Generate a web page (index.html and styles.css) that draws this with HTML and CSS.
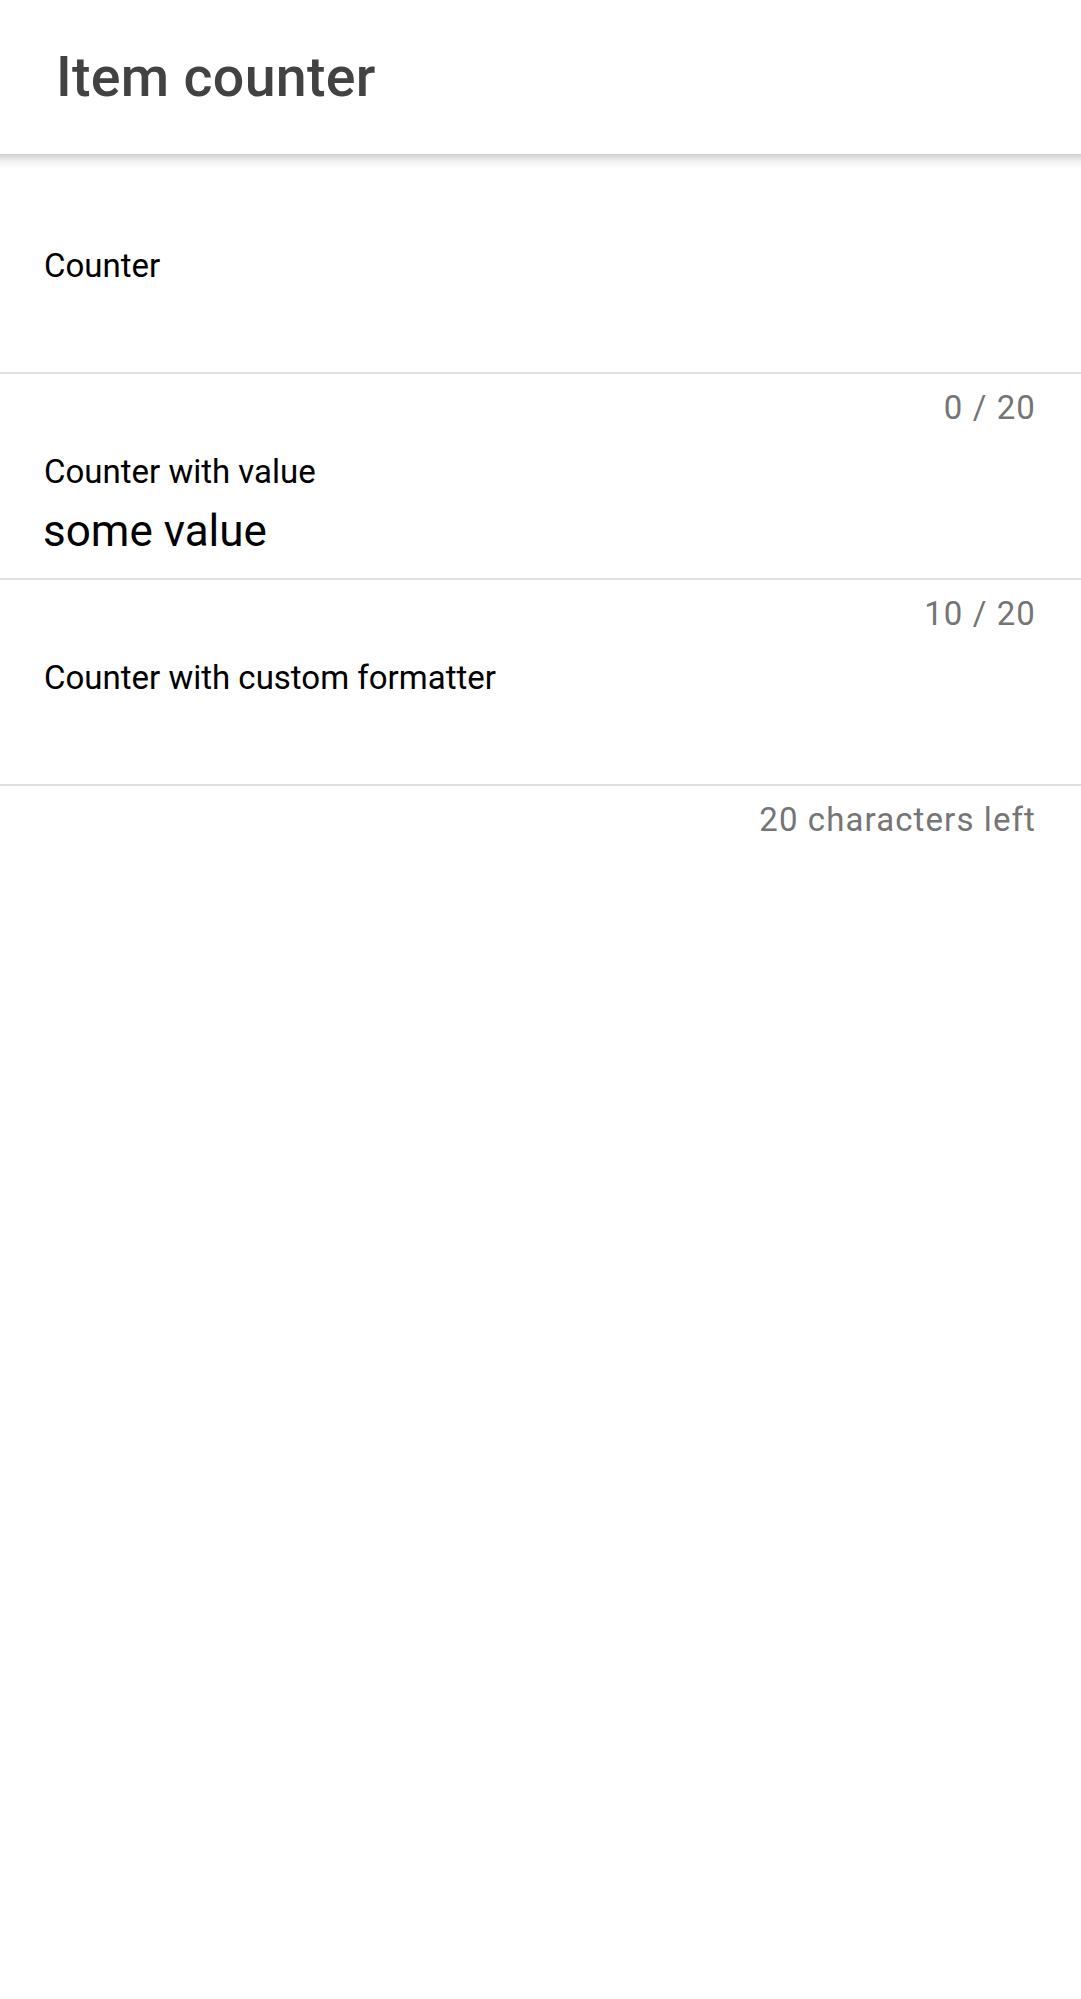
FILE: index.html
```html
<!DOCTYPE html>
<html lang="en">
<head>
<meta charset="utf-8">
<title>Item counter</title>
<link rel="stylesheet" href="styles.css">
</head>
<body>
<header class="app-bar">
  <h1 class="app-title">Item counter</h1>
</header>
<main class="form">
  <div class="field">
    <label class="field-label" for="f1">Counter</label>
    <input class="field-input" id="f1" type="text" value="">
    <div class="field-counter">0 / 20</div>
  </div>
  <div class="field">
    <label class="field-label" for="f2">Counter with value</label>
    <input class="field-input" id="f2" type="text" value="some value">
    <div class="field-counter">10 / 20</div>
  </div>
  <div class="field">
    <label class="field-label" for="f3">Counter with custom formatter</label>
    <input class="field-input" id="f3" type="text" value="">
    <div class="field-counter">20 characters left</div>
  </div>
</main>
</body>
</html>
```
FILE: styles.css
```css
html, body {
  margin: 0;
  padding: 0;
  background: #ffffff;
  font-family: Roboto, "Noto Sans", "Liberation Sans", sans-serif;
}

.app-bar {
  position: relative;
  height: 154px;
  display: flex;
  align-items: center;
  padding-left: 56px;
  background: #ffffff;
}

.app-bar::after {
  content: "";
  position: absolute;
  left: 0;
  right: 0;
  top: 100%;
  height: 15px;
  background: linear-gradient(to bottom, rgba(0, 0, 0, 0.19), rgba(0, 0, 0, 0.06) 45%, rgba(0, 0, 0, 0));
}

.app-title {
  margin: 0;
  font-size: 55.5px;
  font-weight: 500;
  letter-spacing: 0.3px;
  color: #424242;
  line-height: normal;
}

.form {
  padding-top: 68px;
}

.field {
  padding-top: 24px;
}

.field-label {
  display: block;
  padding-left: 44px;
  font-size: 33px;
  line-height: 40px;
  color: #000000;
}

.field-input {
  display: block;
  width: 100%;
  box-sizing: border-box;
  height: 77px;
  margin: 11px 0 0 0;
  padding: 0 48px 19px 43px;
  border: 0;
  border-bottom: 2px solid #e0e0e0;
  outline: none;
  background: transparent;
  font-family: Roboto, "Noto Sans", "Liberation Sans", sans-serif;
  font-size: 44px;
  line-height: 56px;
  color: #000000;
}

.field-counter {
  margin-top: 14px;
  padding-right: 45px;
  text-align: right;
  font-size: 33px;
  line-height: 40px;
  letter-spacing: 1.1px;
  color: #757575;
}
```
